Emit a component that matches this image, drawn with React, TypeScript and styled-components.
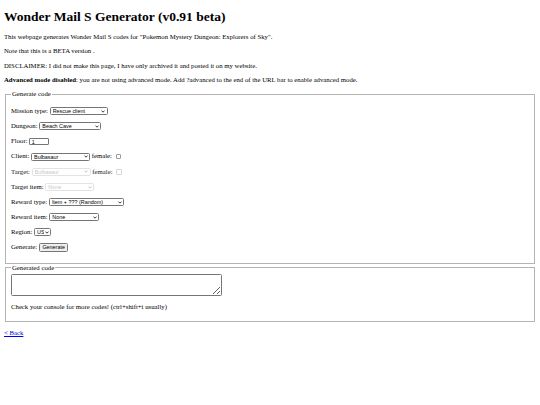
import React from "react";
import styled, { createGlobalStyle } from "styled-components";

const Global = createGlobalStyle`
  html, body { background: #fff; }
  body {
    margin: 4px;
    font-family: "Liberation Serif", "Times New Roman", serif;
    font-size: 6.75px;
    color: #000;
  }
`;

const Title = styled.h1`
  font-size: 13.5px;
  font-weight: bold;
  margin: 4.9px 0 8.9px;
  line-height: 15.3px;
`;

const Para = styled.p`
  margin: 6.67px 0;
  line-height: 7.66px;
`;

const Row = styled.p`
  margin: 6.67px 0;
  line-height: 8.5px;
  height: 8.5px;
  display: flex;
  align-items: center;
  white-space: nowrap;
`;

const Label = styled.span<{ $muted?: boolean }>`
  margin-right: 1.7px;
  color: ${(p) => (p.$muted ? "#222" : "#000")};
`;

const Fieldset = styled.fieldset`
  margin: 0 1px;
  padding: 2.33px 5px 4.17px;
  border: 1px solid #b4b4b4;
  min-width: 0;
`;

const Legend = styled.legend`
  padding: 0 1px;
  font-size: 6.75px;
  line-height: 7.66px;
`;

const Select = styled.select<{ $w: number }>`
  appearance: none;
  -webkit-appearance: none;
  box-sizing: border-box;
  width: ${(p) => p.$w}px;
  height: 8px;
  margin: 0;
  padding: 0 6px 0 2px;
  font-family: Arial, "Liberation Sans", sans-serif;
  font-size: 5.4px;
  line-height: 6px;
  color: #000;
  background: #fff;
  border: 0.5px solid #767676;
  border-radius: 1.5px;
  outline: none;
  &:disabled {
    color: #b0b0b0;
    border-color: #d8d8d8;
  }
`;

const SelectWrap = styled.span`
  position: relative;
  display: inline-flex;
  align-items: center;
`;

const Chevron = styled.svg<{ $disabled?: boolean }>`
  position: absolute;
  right: 2.2px;
  top: 50%;
  margin-top: -1.5px;
  width: 4px;
  height: 3px;
  pointer-events: none;
  stroke: ${(p) => (p.$disabled ? "#b8b8b8" : "#111")};
`;

const TextInput = styled.input`
  box-sizing: border-box;
  width: 20px;
  height: 7.5px;
  margin: 0;
  padding: 0 1.5px;
  font-family: Arial, "Liberation Sans", sans-serif;
  font-size: 5.4px;
  border: 0.5px solid #767676;
  border-radius: 1px;
  outline: none;
`;

const Check = styled.span<{ $disabled?: boolean }>`
  display: inline-block;
  box-sizing: border-box;
  width: 5.5px;
  height: 5.5px;
  margin-left: 2px;
  border: 0.5px solid ${(p) => (p.$disabled ? "#d6d6d6" : "#9a9a9a")};
  border-radius: 1px;
  background: #fff;
`;

const Button = styled.button`
  box-sizing: border-box;
  height: 8.5px;
  margin: 0;
  padding: 0 2.5px;
  font-family: Arial, "Liberation Sans", sans-serif;
  font-size: 5.4px;
  line-height: 7px;
  color: #000;
  background: #efefef;
  border: 0.5px solid #767676;
  border-radius: 1.5px;
`;

const TextArea = styled.textarea`
  display: block;
  box-sizing: border-box;
  width: 211px;
  height: 22.5px;
  margin: 0 0 3.5px;
  padding: 1px;
  font-size: 6.67px;
  border: 0.5px solid #767676;
  border-radius: 1.5px;
  resize: both;
  outline: none;
`;

const BackLink = styled.a`
  color: #0000ee;
  text-decoration: underline;
`;

const Spaced = styled(Label)`
  margin-left: 1.7px;
`;

type DropProps = {
  w: number;
  value: string;
  options: string[];
  disabled?: boolean;
};

function Drop({ w, value, options, disabled }: DropProps) {
  return (
    <SelectWrap>
      <Select $w={w} defaultValue={value} disabled={disabled}>
        {options.map((o) => (
          <option key={o} value={o}>
            {o}
          </option>
        ))}
      </Select>
      <Chevron $disabled={disabled} viewBox="0 0 8 6" fill="none" strokeWidth={1.6}>
        <path d="M1 1.2 L4 4.4 L7 1.2" />
      </Chevron>
    </SelectWrap>
  );
}

export default function App() {
  return (
    <>
      <Global />
      <Title>Wonder Mail S Generator (v0.91 beta)</Title>
      <Para>This webpage generates Wonder Mail S codes for "Pokemon Mystery Dungeon: Explorers of Sky".</Para>
      <Para>Note that this is a BETA version .</Para>
      <Para>DISCLAIMER: I did not make this page, I have only archived it and posted it on my website.</Para>
      <Para>
        <b>Advanced mode disabled</b>: you are not using advanced mode. Add ?advanced to the end of the URL bar to
        enable advanced mode.
      </Para>
      <Fieldset>
        <Legend>Generate code</Legend>
        <Row>
          <Label>Mission type:</Label>
          <Drop w={58} value="Rescue client" options={["Rescue client", "Rescue target", "Escort to target", "Explore with client"]} />
        </Row>
        <Row>
          <Label>Dungeon:</Label>
          <Drop w={62} value="Beach Cave" options={["Beach Cave", "Drenched Bluff", "Mt. Bristle"]} />
        </Row>
        <Row>
          <Label>Floor:</Label>
          <TextInput defaultValue="1" />
        </Row>
        <Row>
          <Label>Client:</Label>
          <Drop w={59} value="Bulbasaur" options={["Bulbasaur", "Ivysaur", "Venusaur"]} />
          <Spaced>female:</Spaced>
          <Check />
        </Row>
        <Row>
          <Label $muted>Target:</Label>
          <Drop w={59} value="Bulbasaur" options={["Bulbasaur"]} disabled />
          <Spaced $muted>female:</Spaced>
          <Check $disabled />
        </Row>
        <Row>
          <Label>Target item:</Label>
          <Drop w={49} value="None" options={["None"]} disabled />
        </Row>
        <Row>
          <Label>Reward type:</Label>
          <Drop w={75} value="Item + ??? (Random)" options={["Cash", "Cash + ??? (Random)", "Item", "Item + ??? (Random)"]} />
        </Row>
        <Row>
          <Label>Reward item:</Label>
          <Drop w={50} value="None" options={["None", "Stick", "Iron Thorn"]} />
        </Row>
        <Row>
          <Label>Region:</Label>
          <Drop w={17} value="US" options={["US", "EU"]} />
        </Row>
        <Row>
          <Label>Generate:</Label>
          <Button type="button">Generate</Button>
        </Row>
      </Fieldset>
      <Fieldset>
        <Legend>Generated code</Legend>
        <TextArea />
        <Para>Check your console for more codes! (ctrl+shift+i usually)</Para>
      </Fieldset>
      <Para>
        <BackLink href="#">&lt; Back</BackLink>
      </Para>
    </>
  );
}
